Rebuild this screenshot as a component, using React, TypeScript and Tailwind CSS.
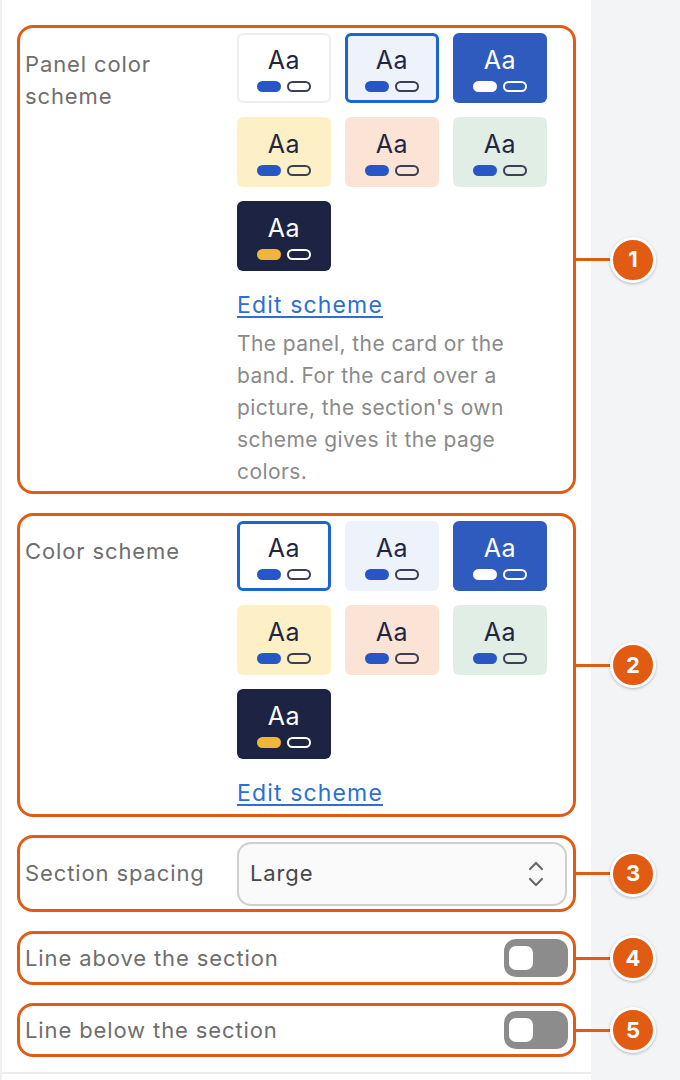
type Swatch = {
  bg: string;
  text: string;
  pill: string;
  ring: string;
  border: string;
};

const swatches: Swatch[] = [
  { bg: "bg-white", text: "text-[#1f2544]", pill: "bg-[#2657c5]", ring: "border-[#3b3f55]", border: "border-2 border-[#eeeeee]" },
  { bg: "bg-[#eef3fb]", text: "text-[#1f2544]", pill: "bg-[#2657c5]", ring: "border-[#3b3f55]", border: "border-2 border-transparent" },
  { bg: "bg-[#2f5bbe]", text: "text-white", pill: "bg-white", ring: "border-white", border: "border-2 border-transparent" },
  { bg: "bg-[#fdf0c6]", text: "text-[#1f2544]", pill: "bg-[#2657c5]", ring: "border-[#3b3f55]", border: "border-2 border-transparent" },
  { bg: "bg-[#fbe4d5]", text: "text-[#1f2544]", pill: "bg-[#2657c5]", ring: "border-[#3b3f55]", border: "border-2 border-transparent" },
  { bg: "bg-[#e1eee5]", text: "text-[#1f2544]", pill: "bg-[#2657c5]", ring: "border-[#3b3f55]", border: "border-2 border-transparent" },
  { bg: "bg-[#1d2443]", text: "text-white", pill: "bg-[#f2b53c]", ring: "border-white", border: "border-2 border-transparent" },
];

function SwatchGrid({ selected }: { selected: number }) {
  return (
    <div className="grid grid-cols-[94px_94px_94px] gap-[14px]">
      {swatches.map((s, i) => (
        <div
          key={i}
          className={`h-[70px] rounded-[6px] flex flex-col items-center ${s.bg} ${
            i === selected ? "border-[3px] border-[#1a66d0] pt-[9px]" : `${s.border} pt-[10px]`
          }`}
        >
          <span className={`text-[25px] leading-[30px] tracking-[0.02em] ${s.text}`}>Aa</span>
          <div className="flex gap-[6px] mt-[6px]">
            <span className={`w-[24px] h-[11px] rounded-full ${s.pill}`} />
            <span className={`w-[24px] h-[11px] rounded-full border-2 ${s.ring}`} />
          </div>
        </div>
      ))}
    </div>
  );
}

function Badge({ n }: { n: number }) {
  return (
    <div className="absolute left-full top-1/2 -translate-y-1/2 flex items-center">
      <div className="w-[37px] h-[3px] bg-[#e15b13]" />
      <div className="w-[46px] h-[46px] rounded-full bg-[#e15b13] border-[3px] border-white shadow-[0_1px_3px_rgba(0,0,0,0.25)] flex items-center justify-center text-white font-bold text-[22px]">
        {n}
      </div>
    </div>
  );
}

function Toggle() {
  return (
    <div className="w-[64px] h-[38px] rounded-[12px] bg-[#8c8c8c] flex items-center pl-[5px]">
      <div className="w-[24px] h-[24px] rounded-[7px] bg-white" />
    </div>
  );
}

function UpDown() {
  return (
    <svg width="18" height="28" viewBox="0 0 18 28" fill="none" stroke="#6a6a6a" strokeWidth="2.2" strokeLinecap="round" strokeLinejoin="round">
      <path d="M3 9l6-6 6 6" />
      <path d="M3 19l6 6 6-6" />
    </svg>
  );
}

export default function App() {
  return (
    <div className="flex w-[680px] h-[1080px] overflow-hidden font-['Inter',sans-serif]">
      <div className="w-[591px] bg-white border-l-2 border-[#f0f0f0] pl-[15px] pr-[15px] pt-[25px] flex flex-col">
        <div className="relative border-[3px] border-[#e15b13] rounded-[16px] flex pl-[5px] pt-[5px] pb-[3px] h-[469px]">
          <div className="w-[212px] pt-[15px] text-[22px] leading-[32px] tracking-[0.04em] text-[#6e6e6e]">Panel color<br />scheme</div>
          <div className="flex flex-col">
            <SwatchGrid selected={1} />
            <a className="mt-[18px] text-[23px] leading-[32px] tracking-[0.05em] text-[#2a6fd6] underline underline-offset-[3px]">Edit scheme</a>
            <p className="mt-[7px] w-[312px] text-[21px] leading-[32px] tracking-[0.02em] text-[#8a8a8a]">
              The panel, the card or the band. For the card over a picture, the section's own scheme gives it the page colors.
            </p>
          </div>
          <Badge n={1} />
        </div>

        <div className="relative mt-[19px] border-[3px] border-[#e15b13] rounded-[16px] flex pl-[5px] pt-[5px] h-[304px]">
          <div className="w-[212px] pt-[14px] text-[22px] leading-[32px] tracking-[0.04em] text-[#6e6e6e]">Color scheme</div>
          <div className="flex flex-col">
            <SwatchGrid selected={0} />
            <a className="mt-[18px] text-[23px] leading-[32px] tracking-[0.05em] text-[#2a6fd6] underline underline-offset-[3px]">Edit scheme</a>
          </div>
          <Badge n={2} />
        </div>

        <div className="relative mt-[18px] border-[3px] border-[#e15b13] rounded-[16px] flex items-center pl-[5px] pr-[6px] h-[77px]">
          <div className="w-[212px] text-[22px] tracking-[0.04em] text-[#6e6e6e]">Section spacing</div>
          <div className="flex-1 h-[64px] rounded-[14px] border-2 border-[#cfcfcf] bg-[#fafafa] flex items-center justify-between pl-[11px] pr-[20px]">
            <span className="text-[22px] tracking-[0.04em] text-[#474747]">Large</span>
            <UpDown />
          </div>
          <Badge n={3} />
        </div>

        <div className="relative mt-[19px] border-[3px] border-[#e15b13] rounded-[16px] flex items-center justify-between pl-[5px] pr-[5px] h-[54px]">
          <div className="text-[22px] tracking-[0.04em] text-[#6e6e6e]">Line above the section</div>
          <Toggle />
          <Badge n={4} />
        </div>

        <div className="relative mt-[18px] border-[3px] border-[#e15b13] rounded-[16px] flex items-center justify-between pl-[5px] pr-[5px] h-[54px]">
          <div className="text-[22px] tracking-[0.04em] text-[#6e6e6e]">Line below the section</div>
          <Toggle />
          <Badge n={5} />
        </div>

        <div className="mt-[15px] -ml-[15px] -mr-[15px] h-[2px] bg-[#ececec]" />
      </div>
      <div className="flex-1 bg-[#f3f4f6]" />
    </div>
  );
}
